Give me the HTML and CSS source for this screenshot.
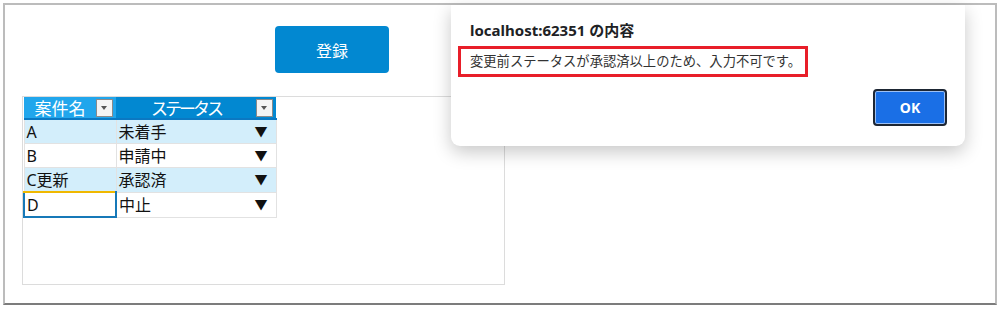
FILE: index.html
```html
<!DOCTYPE html>
<html lang="ja">
<head>
  <meta charset="UTF-8">
  <title>案件ステータス</title>
  <link rel="stylesheet" href="styles.css">
</head>
<body>

  <div class="frame">
    <div class="toolbar">
      <button class="btn-save">登録</button>
    </div>

    <div class="grid-wrap">
      <table class="grid">
        <thead>
          <tr>
            <th class="col-name"><span class="th-label">案件名</span><span class="filter"></span></th>
            <th class="col-status"><span class="th-label kana">ステータス</span><span class="filter"></span></th>
          </tr>
        </thead>
        <tbody>
          <tr class="alt">
            <td>A</td>
            <td class="status">未着手<span class="arrow">▼</span></td>
          </tr>
          <tr>
            <td>B</td>
            <td class="status">申請中<span class="arrow">▼</span></td>
          </tr>
          <tr class="alt">
            <td>C更新</td>
            <td class="status">承認済<span class="arrow">▼</span></td>
          </tr>
          <tr>
            <td class="selected">D</td>
            <td class="status">中止<span class="arrow">▼</span></td>
          </tr>
        </tbody>
      </table>
    </div>

    <!-- browser alert -->
    <div class="dialog">
      <div class="dialog-title">localhost:62351 の内容</div>
      <div class="dialog-msg">変更前ステータスが承認済以上のため、入力不可です。</div>
      <div class="dialog-actions">
        <button class="btn-ok">OK</button>
      </div>
    </div>
  </div>

</body>
</html>
```

FILE: styles.css
```css
body {
  margin: 0;
  padding: 0;
  background: #fff;
  font-family: 'Noto Sans', 'Noto Sans CJK JP', sans-serif;
}
.frame {
  position: relative;
  margin: 3px;
  width: 990px;
  height: 298px;
  border: 2px solid #bcbcbc;
  border-bottom-color: #7c7c7c;
}
.toolbar {
  padding: 21px 0 0 270px;
}
.btn-save {
  width: 114px;
  height: 47px;
  background-color: #0288d1;
  color: white;
  border: none;
  border-radius: 4px;
  font-family: 'Noto Sans CJK JP', sans-serif;
  font-size: 16px;
  padding: 0;
}
.grid-wrap {
  margin: 23px 0 0 17px;
  width: 481px;
  height: 187px;
  border: 1px solid #dcdcdc;
}
.grid {
  border-collapse: collapse;
  font-size: 16px;
}
.grid th {
  height: 21px;
  padding: 0;
  color: white;
  font-weight: normal;
  font-size: 17px;
  font-family: 'Noto Sans CJK JP', sans-serif;
  border-bottom: 2px solid #0b78c2;
  position: relative;
  line-height: 21px;
}
.col-name {
  width: 92px;
  background-color: #21a6ec;
}
.col-status {
  width: 160px;
  background-color: #0288d1;
}
.th-label {
  display: block;
  padding-right: 20px;
  text-align: center;
}
.th-label.kana {
  letter-spacing: -3px;
}
.filter {
  position: absolute;
  right: 3px;
  top: 2px;
  width: 15px;
  height: 16px;
  background: #f4f4f4;
  border: 1px solid #8a8a8a;
}
.filter::after {
  content: "";
  position: absolute;
  left: 4px;
  top: 6px;
  border-left: 3.5px solid transparent;
  border-right: 3.5px solid transparent;
  border-top: 4px solid #555;
}
.grid td {
  height: 23px;
  padding: 0 2px;
  border: 1px solid #e2e2e2;
  border-top: none;
  line-height: 22px;
  color: #111;
}
.grid tr.alt td {
  background-color: #d3eefb;
}
.status {
  position: relative;
}
.arrow {
  position: absolute;
  right: 8px;
  top: 0;
  font-size: 13px;
}
.grid td.selected {
  border: 2px solid #1679b8;
  border-top: 2px solid #f0b800;
}
.dialog {
  position: absolute;
  left: 446px;
  top: 0;
  width: 514px;
  height: 141px;
  background: white;
  border-radius: 0 0 9px 9px;
  box-shadow: 0 6px 18px rgba(0,0,0,0.22);
  font-family: 'Noto Sans', 'Noto Sans CJK JP', sans-serif;
}
.dialog-title {
  padding: 14px 0 0 19px;
  font-size: 15px;
  font-weight: bold;
  color: #202124;
}
.dialog-msg {
  margin: 6px 0 0 7px;
  width: 335px;
  height: 25px;
  border: 3px solid #e81e29;
  padding-left: 9px;
  font-size: 13.3px;
  line-height: 25px;
  color: #333;
}
.dialog-actions {
  display: flex;
  justify-content: flex-end;
  padding: 12px 18px 0 0;
}
.btn-ok {
  width: 74px;
  height: 37px;
  background-color: #1a6fe6;
  color: white;
  font-weight: bold;
  font-size: 14px;
  border: 2px solid #1d2633;
  box-shadow: inset 0 0 0 1px #9cc0f5;
  border-radius: 4px;
  font-family: 'Noto Sans', sans-serif;
}
```
